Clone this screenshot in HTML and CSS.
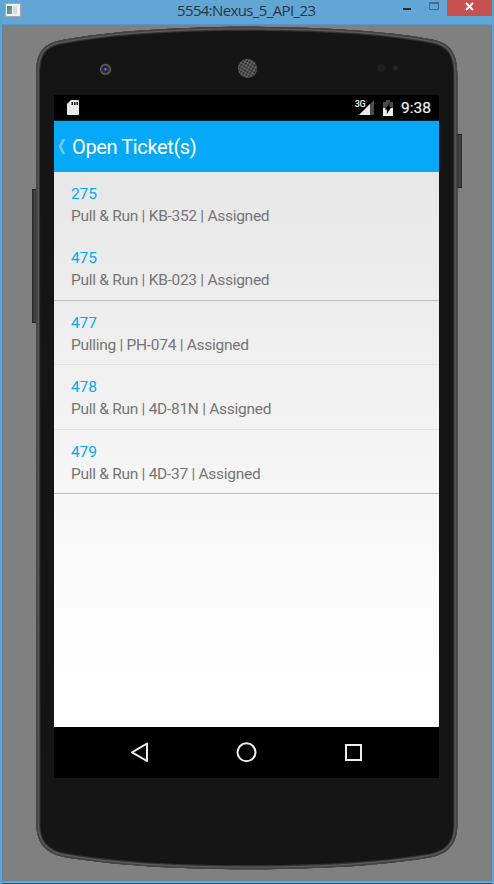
FILE: index.html
```html
<!DOCTYPE html>
<html lang="en">
<head>
<meta charset="utf-8">
<title>5554:Nexus_5_API_23</title>
<link rel="stylesheet" href="styles.css">
</head>
<body>
<div class="window">
  <header class="titlebar">
    <svg class="app-icon" width="16" height="14" viewBox="0 0 16 14">
      <defs><linearGradient id="app" x1="0" y1="0" x2="1" y2="1"><stop offset="0" stop-color="#4b7fa0"/><stop offset="1" stop-color="#64b580"/></linearGradient></defs>
      <path fill="#a5a9ad" d="M0 0h16v14H0z"/><path fill="#f4f2f3" d="M1 1h14v12H1z"/>
      <path fill="url(#app)" d="M2 3h5v8H2z"/><path fill="#dcdcdf" d="M8 3h4v8H8z"/><path fill="#fff" d="M13 3h1v8h-1z"/>
    </svg>
    <h1 class="window-title">5554:Nexus_5_API_23</h1>
    <div class="controls">
      <svg width="44" height="16" viewBox="0 0 44 16"><path fill="#252b31" d="M0 8h8v2H0z"/><path fill="none" stroke="#40698c" d="M26.500 2.500h9v7h-9z"/><path fill="#40698c" d="M26 2h10v2H26z"/></svg>
      <div class="close"><svg width="9" height="9" viewBox="0 0 9 9"><path d="M1 1l7 7M8 1L1 8" stroke="#fff" stroke-width="2"/></svg></div>
    </div>
  </header>
  <main class="desktop">
    <svg class="shell" width="490" height="856" viewBox="2 25 490 856">
      <defs>
        <linearGradient id="key"><stop offset="0" stop-color="#202020"/><stop offset=".5" stop-color="#474747"/><stop offset="1" stop-color="#292929"/></linearGradient>
        <pattern id="mesh" width="3" height="3" patternUnits="userSpaceOnUse" patternTransform="rotate(30)"><path fill="#666" d="M0 0h3v3H0z"/><circle fill="#161616" cx="1.500" cy="1.500" r="1"/></pattern>
        <radialGradient id="lens"><stop offset="0" stop-color="#8c8cd8"/><stop offset=".3" stop-color="#29296c"/><stop offset=".5" stop-color="#242424"/><stop offset=".8" stop-color="#4c4c4c"/><stop offset="1" stop-color="#777"/></radialGradient>
        <path id="body" d="M36 75C36 54 42 44 60 40.500C108 31 177 27 247 26.700C318 27 388 31 432 39.500C451 43 457.300 54 457.300 75V825C457.300 844 448 854 430 857.500C380 866 314 869.300 247 869.300C180 869.300 110 865 64 857C47 854 36.500 843 36.500 826Z"/>
        <clipPath id="edge"><use href="#body"/></clipPath>
      </defs>
      <path fill="url(#key)" d="M32 190h5v133h-5z"/><path fill="url(#key)" d="M457 134h5v54h-5z"/>
      <path stroke="#222" d="M32 189.500h5M32 322.500h5M457 134.500h5M457 187.500h5"/>
      <use href="#body" fill="#151515"/>
      <g clip-path="url(#edge)" fill="none">
        <use href="#body" stroke="#333" stroke-width="8"/>
        <use href="#body" stroke="#5c5c5d" stroke-width="5.600"/>
        <use href="#body" stroke="#434343" stroke-width="3"/>
      </g>
      <circle cx="105.500" cy="69.300" r="5.500" fill="url(#lens)"/>
      <circle cx="247.500" cy="68.500" r="9.700" fill="url(#mesh)"/>
      <circle cx="381" cy="68" r="4" fill="#202020"/><circle cx="395.500" cy="68" r="2.500" fill="#252525"/>
    </svg>
    <section class="screen">
      <div class="status">
        <svg width="12" height="15" viewBox="0 0 12 15"><path fill="#e9e9e9" d="M4 0h7q1 0 1 1v13q0 1-1 1H1q-1 0-1-1V4z"/><path fill="#111" d="M4.500 2H6v3H4.500zM7 2h1.500v3H7zM9.500 2H11v3H9.500z"/></svg>
        <div class="status-right">
          <span class="network">3G</span>
          <svg class="signal" width="15" height="15" viewBox="0 0 15 15"><path fill="#4a4a4a" d="M15 0v15H0z"/><path fill="#e9e9e9" d="M11 4v11H0z"/></svg>
          <svg class="battery" width="10" height="16" viewBox="0 0 10 16"><path fill="#4a4a4a" d="M3 0h4v2h3v6H0V2h3z"/><path fill="#eee" d="M0 8h10v8H0z"/><path fill="#000" d="M6.500 3v4h2L3.800 14V9.500H1.700z"/></svg>
          <span class="clock">9:38</span>
        </div>
      </div>
      <div class="appbar">
        <svg width="8" height="15" viewBox="0 0 8 15"><path d="M4.500 0h2.800L3.500 7.500 7.300 15H4.500L.5 7.500z" fill="#70c9fb"/></svg>
        <h2>Open Ticket(s)</h2>
      </div>
      <div class="content">
        <ul class="tickets">
          <li class="plain"><b>275</b><span>Pull &amp; Run | KB-352 | Assigned</span></li>
          <li class="tall dark"><b>475</b><span>Pull &amp; Run | KB-023 | Assigned</span></li>
          <li><b>477</b><span>Pulling | PH-074 | Assigned</span></li>
          <li class="tall"><b>478</b><span>Pull &amp; Run | 4D-81N | Assigned</span></li>
          <li class="dark"><b>479</b><span>Pull &amp; Run | 4D-37 | Assigned</span></li>
        </ul>
      </div>
      <nav class="navbar">
        <svg width="385" height="51" viewBox="54 727 385 51" fill="none" stroke="#eee" stroke-width="2" stroke-linejoin="round"><path d="M147 743.500v17.500L132 752.300z"/><circle cx="246.500" cy="752.300" r="9"/><path d="M346 745h15v15h-15z" stroke-linejoin="miter"/></svg>
      </nav>
    </section>
  </main>
</div>
</body>
</html>
```
FILE: styles.css
```css
* { box-sizing: border-box; }
body { margin: 0; width: 494px; height: 884px; overflow: hidden; font-family: Roboto, sans-serif; }
h1, h2, ul { margin: 0; padding: 0; font-weight: 400; }
svg { display: block; flex: none; }
.window { height: 884px; background: #62a6d6; border: 0 solid #5ca3d6; border-width: 0 2px; display: flex; flex-direction: column; box-shadow: inset 0 -1px #34566f; }
.titlebar { height: 25px; display: flex; align-items: flex-start; flex: none; border-bottom: 1px solid #5198cd; }
.app-icon { margin: 3px 0 0 3px; }
.window-title { margin-left: 156px; width: 142px; font: 15px/20px "Open Sans", sans-serif; letter-spacing: -.63px; color: #283640; white-space: nowrap; }
.controls { margin-left: auto; display: flex; }
.close { width: 45px; height: 16px; background: #c75050; display: flex; justify-content: center; padding-top: 2px; }
.desktop { height: 856px; background: #808080; border: 1px solid #6a8194; border-width: 0 1px 1px; position: relative; padding: 70px 0 0 51px; }
.shell { position: absolute; top: 0; left: -1px; }
.screen { position: relative; width: 385px; height: 683px; display: flex; flex-direction: column; background: #000; }
.status { height: 26px; flex: none; display: flex; align-items: center; justify-content: space-between; padding: 0 8px 0 13px; border-bottom: 1px solid #002437; }
.status-right { display: flex; height: 25px; color: #eee; }
.network { font-size: 9px; line-height: 10px; margin-top: 4px; font-weight: 500; letter-spacing: -.5px; }
.signal { margin: 5px 0 0 -6px; }
.battery { margin: 5px 8px 0 9px; }
.clock { font-size: 15.500px; line-height: 26px; font-weight: 400; -webkit-text-stroke: .2px #eee; }
.appbar { height: 51px; flex: none; background: #05a9f8; display: flex; align-items: center; padding-left: 4px; gap: 6px; color: #fff; }
.appbar h2 { font-size: 20px; line-height: 50px; letter-spacing: -.38px; }
.content { flex: 1; background: linear-gradient(#e7e7e7, #fff 92%); }
.tickets { list-style: none; }
.tickets li { height: 64px; padding: 11px 17px 0; border-bottom: 1px solid #e3e3e3; font-size: 15.500px; line-height: 22px; letter-spacing: -.28px; color: #757575; }
.tickets .tall { height: 65px; }
.tickets .plain { border-color: transparent; }
.tickets .dark { border-color: #bcbcbc; }
.tickets b, .tickets span { display: block; font-weight: 400; white-space: nowrap; }
.tickets b { color: #05a9f8; letter-spacing: -.1px; }
.navbar { height: 51px; flex: none; }
```
